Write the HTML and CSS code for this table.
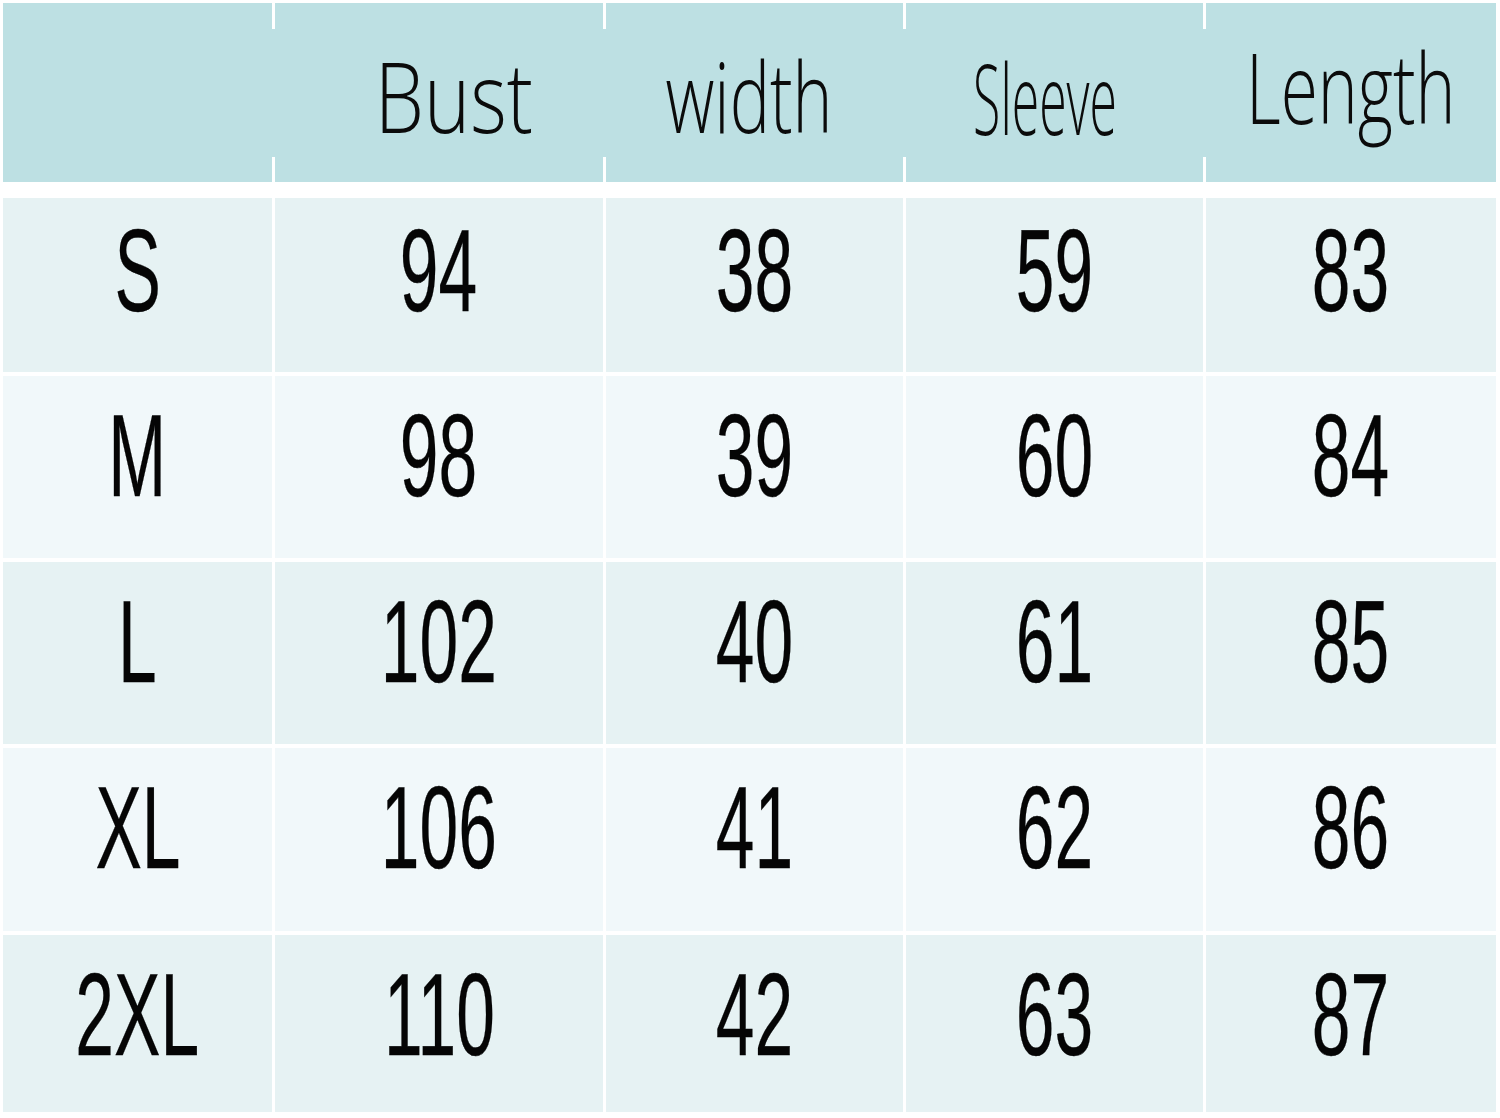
FILE: index.html
```html
<!DOCTYPE html>
<html lang="en">
<head>
<meta charset="utf-8">
<title>Size chart</title>
<link rel="stylesheet" href="styles.css">
</head>
<body>
<div class="chart">
  <div class="hd"></div>
  <div class="hd sep"><span class="ht ht-bust">Bust</span></div>
  <div class="hd sep"><span class="ht ht-width">width</span></div>
  <div class="hd sep"><span class="ht ht-sleeve">Sleeve</span></div>
  <div class="hd sep"><span class="ht ht-length">Length</span></div>

  <div class="c odd first"><span class="n">S</span></div>
  <div class="c odd first"><span class="n">94</span></div>
  <div class="c odd first"><span class="n">38</span></div>
  <div class="c odd first"><span class="n">59</span></div>
  <div class="c odd first"><span class="n">83</span></div>

  <div class="c even"><span class="n">M</span></div>
  <div class="c even"><span class="n">98</span></div>
  <div class="c even"><span class="n">39</span></div>
  <div class="c even"><span class="n">60</span></div>
  <div class="c even"><span class="n">84</span></div>

  <div class="c odd"><span class="n">L</span></div>
  <div class="c odd"><span class="n">102</span></div>
  <div class="c odd"><span class="n">40</span></div>
  <div class="c odd"><span class="n">61</span></div>
  <div class="c odd"><span class="n">85</span></div>

  <div class="c even"><span class="n">XL</span></div>
  <div class="c even"><span class="n">106</span></div>
  <div class="c even"><span class="n">41</span></div>
  <div class="c even"><span class="n">62</span></div>
  <div class="c even"><span class="n">86</span></div>

  <div class="c odd"><span class="n">2XL</span></div>
  <div class="c odd"><span class="n">110</span></div>
  <div class="c odd"><span class="n">42</span></div>
  <div class="c odd"><span class="n">63</span></div>
  <div class="c odd"><span class="n">87</span></div>
</div>
</body>
</html>
```
FILE: styles.css
```css
html, body {
  margin: 0;
  padding: 0;
  background: #ffffff;
}

.chart {
  display: grid;
  grid-template-columns: 269px 331px 300px 300px 293px;
  grid-template-rows: 191px 174px 182px 182px 183px 177px;
  row-gap: 4px;
  padding: 3px 4px 0 3px;
}

.hd {
  background: #bde0e3;
  margin-bottom: 12px;
  display: flex;
  justify-content: center;
  align-items: flex-start;
  overflow: hidden;
}

.hd.sep {
  border-left: 3px solid #ffffff;
  border-image: linear-gradient(to bottom, #ffffff 27px, transparent 27px, transparent calc(100% - 26px), #ffffff calc(100% - 26px)) 1;
}

.ht {
  display: inline-block;
  font-family: "Open Sans", "Noto Sans", sans-serif;
  font-weight: 300;
  font-size: 98px;
  line-height: 1;
  color: #0b0b0b;
  white-space: nowrap;
}

.ht-bust {
  margin-top: 43px;
  margin-left: 30px;
  transform: scaleX(0.8);
}

.ht-width {
  margin-top: 43px;
  margin-left: -11px;
  transform: scaleX(0.69);
}

.ht-sleeve {
  margin-top: 45px;
  margin-left: -19px;
  transform: scaleX(0.51);
}

.ht-length {
  margin-top: 34px;
  transform: scaleX(0.69);
}

.c {
  display: flex;
  justify-content: center;
  align-items: flex-start;
  padding-top: 11px;
  border-left: 3px solid #ffffff;
  overflow: hidden;
}

.c.first {
  padding-top: 4px;
}

.c:nth-child(5n+1) {
  border-left: none;
}

.odd {
  background: #e6f2f3;
}

.even {
  background: #f1f8fa;
}

.n {
  display: inline-block;
  font-family: "Liberation Sans", Arial, sans-serif;
  font-size: 116px;
  line-height: 1.2;
  color: #050505;
  transform: scaleX(0.6);
  -webkit-text-stroke: 0.3px #050505;
}
```
